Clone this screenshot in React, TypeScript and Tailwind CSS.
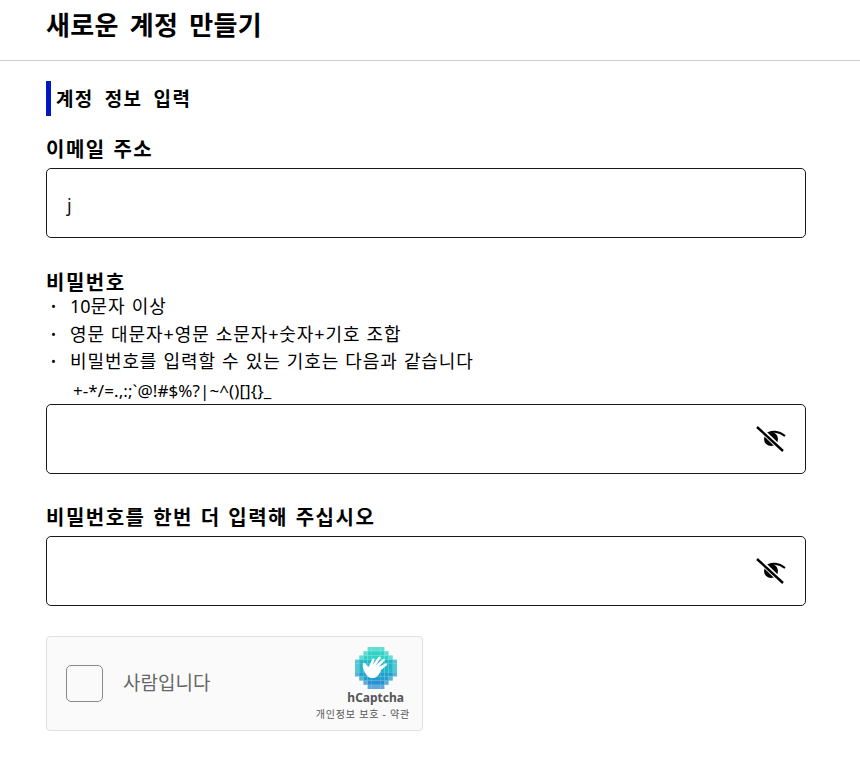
import React from "react";

const FONT = "font-['Noto_Sans','Noto_Sans_CJK_KR',sans-serif]";

// pixel rows of the hCaptcha badge: [row, first col, last col]
const LOGO_ROWS = [
  [0, 3, 6],
  [1, 2, 7],
  [2, 1, 8],
  [3, 0, 9],
  [4, 0, 9],
  [5, 0, 9],
  [6, 0, 9],
  [7, 1, 8],
  [8, 2, 7],
  [9, 3, 6],
];

const logoColor = (r: number, c: number) => {
  const d = Math.max(Math.abs(c - 4.5), Math.abs(r - 4.5)) + Math.min(Math.abs(c - 4.5), Math.abs(r - 4.5)) * 0.5;
  const opacity = d > 5.5 ? 0.5 : d > 4.5 ? 0.75 : 1;
  if (r < 3) return { fill: "#2fd3c6", opacity };
  if (r < 6) return { fill: "#24b6c9", opacity };
  if (r < 8) return { fill: "#1f9fcb", opacity };
  return { fill: "#2a8fd0", opacity };
};

const HCaptchaLogo = () => (
  <svg width="42" height="42" viewBox="0 0 40 40">
    {LOGO_ROWS.flatMap(([r, a, b]) =>
      Array.from({ length: b - a + 1 }, (_, i) => {
        const c = a + i;
        const col = logoColor(r, c);
        return <rect key={`${r}-${c}`} x={c * 4} y={r * 4} width="4" height="4" fill={col.fill} opacity={col.opacity} />;
      })
    )}
    <path
      d="M7.5 19 C7 16.8 7.6 15 9 15.2 C10.4 15.4 11.4 17.4 12.4 19 L13.4 18 L16.6 11.4 C17.3 10 19.2 10.8 18.6 12.4 L16.6 17.2 L22.4 9.6 C23.4 8.4 25.2 9.6 24.2 11 L19.6 17.6 L26.4 11.6 C27.6 10.6 29.2 12 28 13.2 L22.6 18.8 L29 15.6 C30.4 15 31.2 16.6 30 17.6 L25 21.6 C23.6 25.4 21 29.6 16.4 29.6 C12 29.6 8.8 24.6 7.5 19 Z"
      fill="#fff"
    />
  </svg>
);

const EyeOff = () => (
  <svg width="30" height="28" viewBox="0 0 30 28" className="shrink-0">
    <path d="M9 10 C15 5 23 6 29 11" fill="none" stroke="#000" strokeWidth="2" />
    <circle cx="15" cy="14" r="7" fill="#000" />
    <path d="M2 2 L27 26" fill="none" stroke="#fff" strokeWidth="5" />
    <path d="M1 2 L27 26" fill="none" stroke="#000" strokeWidth="2.4" />
  </svg>
);

const Field = ({ value, eye }: { value?: string; eye?: boolean }) => (
  <div className="h-[70px] w-[760px] rounded-[5px] border border-[#1a1a1a] flex items-center justify-between pl-5 pr-[19px]">
    <span className="pt-[3px] text-lg text-[#111]">{value}</span>
    {eye && <EyeOff />}
  </div>
);

const Rule = ({ children }: { children: React.ReactNode }) => (
  <li className="flex h-[27.5px] items-center text-[18px] tracking-[0.9px] [word-spacing:0.6px] text-black">
    <span className="w-6 text-[13px] leading-none pl-[5px]">•</span>
    <span>{children}</span>
  </li>
);

const labelClass = "block h-[28px] text-[20px] font-bold leading-[30px] tracking-[1.5px] [word-spacing:1px]";

export default function App() {
  return (
    <div className={`${FONT} w-[860px] h-[757px] overflow-hidden bg-white text-black`}>
      <header className="h-[61px] border-b border-[#cccccc] pl-[46px]">
        <h1 className="text-[26px] font-bold leading-[50px] tracking-[0.3px] [word-spacing:4px]">새로운 계정 만들기</h1>
      </header>

      <main className="pl-[46px]">
        <h2 className="mt-5 h-[35px] border-l-[5px] border-[#0018c4] pl-[5px] text-[19px] font-bold leading-[37px] tracking-[1.3px] [word-spacing:5px]">계정 정보 입력</h2>

        <label className={`${labelClass} mt-[19px]`}>이메일 주소</label>
        <div className="mt-[5px]">
          <Field value="j" />
        </div>

        <label className={`${labelClass} mt-[30px]`}>비밀번호</label>
        <ul className="mt-[-3px]">
          <Rule><span className="tracking-normal">10</span>문자 이상</Rule>
          <Rule>영문 대문자+영문 소문자+숫자+기호 조합</Rule>
          <Rule>비밀번호를 입력할 수 있는 기호는 다음과 같습니다</Rule>
        </ul>
        <p className="h-[30px] pl-[27px] text-[17px] leading-[30px] tracking-[0.08px]">+-*/=.,:;`@!#$%?|~^()[]{"{}"}_</p>
        <div className="mt-[-2px]">
          <Field eye />
        </div>

        <label className={`${labelClass} mt-[29px]`}>비밀번호를 한번 더 입력해 주십시오</label>
        <div className="mt-[5px]">
          <Field eye />
        </div>

        <div className="mt-[30px] flex h-[95px] w-[377px] items-center justify-between rounded border border-[#e0e0e0] bg-[#fafafa] pl-[19px] pr-3">
          <div className="flex items-center gap-5">
            <div className="h-[37px] w-[37px] rounded-[5px] border border-[#8a8a8a]" />
            <span className="text-[19px] text-[#666]">사람입니다</span>
          </div>
          <div className="flex flex-col items-end pt-[2px]">
            <div className="mr-[13px] h-[42px]">
              <HCaptchaLogo />
            </div>
            <span className="mr-[6px] mt-[1px] text-[12px] font-bold leading-[16px] text-[#555]">hCaptcha</span>
            <span className="mt-[1px] text-[10px] leading-[14px] tracking-[0.8px] text-[#555]">개인정보 보호 - 약관</span>
          </div>
        </div>
      </main>
    </div>
  );
}
